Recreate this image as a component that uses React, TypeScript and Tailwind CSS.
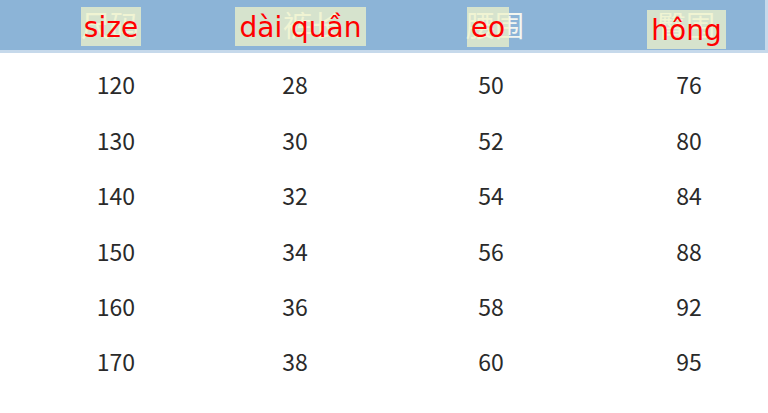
import React from "react";

const rows = [
  ["120", "28", "50", "76"],
  ["130", "30", "52", "80"],
  ["140", "32", "54", "84"],
  ["150", "34", "56", "88"],
  ["160", "36", "58", "92"],
  ["170", "38", "60", "95"],
];

const cjk = { fontFamily: '"Noto Sans CJK SC", "Noto Sans", sans-serif' };
const dv = { fontFamily: '"DejaVu Sans", Verdana, sans-serif' };

export default function App() {
  return (
    <div className="w-[768px] h-[413px] bg-white overflow-hidden">
      <div className="relative h-[53px] bg-[#c6d9eb]">
        <div
          className="flex items-center h-[50px] w-[765px] bg-[#8cb4d7] text-[29px] text-[#f3f6f0]"
          style={cjk}
        >
          <span className="ml-[81px]">尺码</span>
          <span className="ml-[144px]">裤长</span>
          <span className="ml-[125px]">腰围</span>
          <span className="ml-[133px]">臀围</span>
        </div>
        <div
          className="absolute left-[81px] top-[7px] w-[60px] h-[39px] flex items-center justify-center pt-[2px] bg-[rgba(239,243,201,0.75)] text-[28px] text-[#ff0000]"
          style={dv}
        >
          size
        </div>
        <div
          className="absolute left-[235px] top-[7px] w-[131px] h-[39px] flex items-center justify-center pt-[2px] bg-[rgba(239,243,201,0.75)] text-[28px] text-[#ff0000]"
          style={dv}
        >
          dài quần
        </div>
        <div
          className="absolute left-[467px] top-[7px] w-[42px] h-[40px] flex items-center justify-center pt-[2px] bg-[rgba(239,243,201,0.75)] text-[28px] text-[#ff0000]"
          style={dv}
        >
          eo
        </div>
        <div
          className="absolute left-[647px] top-[10px] w-[79px] h-[39px] flex items-center justify-center pt-[2px] bg-[rgba(239,243,201,0.75)] text-[28px] text-[#ff0000]"
          style={dv}
        >
          hông
        </div>
      </div>
      <div className="pt-[4px] text-[23px] text-[#2a2a2a]" style={cjk}>
        {rows.map((r, i) => (
          <div
            key={i}
            className="grid grid-cols-[232px_126px_266px_130px] h-[55.4px] items-center"
          >
            {r.map((v, j) => (
              <div key={j} className="text-center">
                {v}
              </div>
            ))}
          </div>
        ))}
      </div>
    </div>
  );
}
